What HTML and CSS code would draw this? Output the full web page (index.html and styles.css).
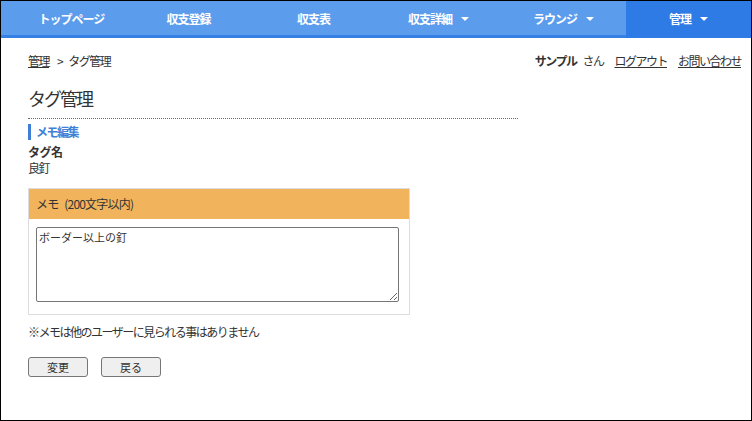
FILE: index.html
```html
<!DOCTYPE html>
<html lang="ja">
<head>
<meta charset="utf-8">
<link rel="stylesheet" href="styles.css">
</head>
<body>
<div class="frame">
  <nav class="nav">
    <a class="nav-item first">トップページ</a>
    <a class="nav-item">収支登録</a>
    <a class="nav-item">収支表</a>
    <a class="nav-item">収支詳細<span class="caret"></span></a>
    <a class="nav-item">ラウンジ<span class="caret"></span></a>
    <a class="nav-item active">管理<span class="caret"></span></a>
  </nav>
  <div class="topbar">
    <div class="crumbs"><a class="link">管理</a><span class="sep">&gt;</span><span>タグ管理</span></div>
    <div class="user"><b>サンプル</b><span class="san">さん</span><a class="link">ログアウト</a><a class="link">お問い合わせ</a></div>
  </div>
  <main class="main">
    <h1 class="title">タグ管理</h1>
    <h2 class="sub">メモ編集</h2>
    <div class="label">タグ名</div>
    <div class="value">良釘</div>
    <div class="panel">
      <div class="panel-head">メモ (200文字以内)</div>
      <div class="panel-body">
        <textarea class="memo">ボーダー以上の釘</textarea>
      </div>
    </div>
    <p class="note">※メモは他のユーザーに見られる事はありません</p>
    <div class="buttons">
      <button class="btn">変更</button>
      <button class="btn">戻る</button>
    </div>
  </main>
</div>
</body>
</html>
```
FILE: styles.css
```css
* { box-sizing: border-box; }
html, body { margin: 0; padding: 0; }
body {
  font-family: "Noto Sans CJK JP", "Noto Sans", sans-serif;
  font-size: 12px;
  letter-spacing: -1.5px;
  color: #333;
  background: #fff;
}
.frame {
  width: 752px;
  height: 421px;
  border: 1px solid #000;
  overflow: hidden;
}
.nav {
  display: flex;
  height: 37px;
  background: #5c9cec;
  border-bottom: 3px solid #3580e4;
}
.nav-item {
  flex: 0 0 125px;
  display: flex;
  align-items: center;
  justify-content: center;
  color: #fff;
  font-weight: bold;
  font-size: 12px;
  letter-spacing: -1px;
  height: 34px;
}
.nav-item.first { padding-left: 16px; }
.nav-item.active {
  flex: 1;
  background: #2f7be6;
  height: 37px;
  margin-bottom: -3px;
  padding-bottom: 3px;
}
.caret {
  display: inline-block;
  width: 0;
  height: 0;
  margin-left: 9px;
  border-left: 4px solid transparent;
  border-right: 4px solid transparent;
  border-top: 4px solid #fff;
  position: relative;
  top: 1px;
}
.topbar {
  display: flex;
  justify-content: space-between;
  padding: 14px 10px 0 27px;
  line-height: 18px;
  color: #333;
}
.link { color: #333; text-decoration: underline; }
.sep { margin: 0 6px 0 8px; }
.user b { color: #333; }
.san { margin: 0 11px 0 6px; }
.user .link + .link { margin-left: 11px; }
.main { padding: 0 0 0 27px; }
.title {
  width: 490px;
  margin: 16px 0 0;
  padding-bottom: 8px;
  font-size: 18px;
  letter-spacing: -2px;
  font-weight: normal;
  line-height: 24px;
  border-bottom: 1px dotted #5a6f86;
}
.sub {
  margin: 5px 0 0;
  font-size: 12px;
  line-height: 16px;
  font-weight: bold;
  color: #3f80d6;
  border-left: 3px solid #3f80d6;
  padding-left: 5px;
}
.label { font-weight: bold; line-height: 16px; margin-top: 4px; letter-spacing: -0.5px; }
.value { line-height: 16px; }
.panel {
  width: 382px;
  margin-top: 12px;
  border: 1px solid #ddd;
}
.panel-head {
  background: #f1b35c;
  height: 30px;
  line-height: 30px;
  padding-left: 7px;
  color: #333;
  letter-spacing: -0.8px;
  word-spacing: 4px;
}
.panel-body { padding: 8px 10px 12px 7px; }
.memo {
  display: block;
  width: 363px;
  height: 75px;
  border: 1px solid #767676;
  border-radius: 2px;
  font-family: inherit;
  font-size: 11px;
  letter-spacing: 0;
  color: #333;
  padding: 1px 2px;
  margin: 0;
  resize: vertical;
}
.note { margin: 9px 0 0; line-height: 16px; }
.buttons { display: flex; gap: 13px; margin-top: 17px; }
.btn {
  width: 60px;
  height: 20px;
  border: 1px solid #767676;
  border-radius: 3px;
  background: #efefef;
  font-family: inherit;
  font-size: 11px;
  letter-spacing: 0;
  color: #333;
  padding: 0;
}
```
